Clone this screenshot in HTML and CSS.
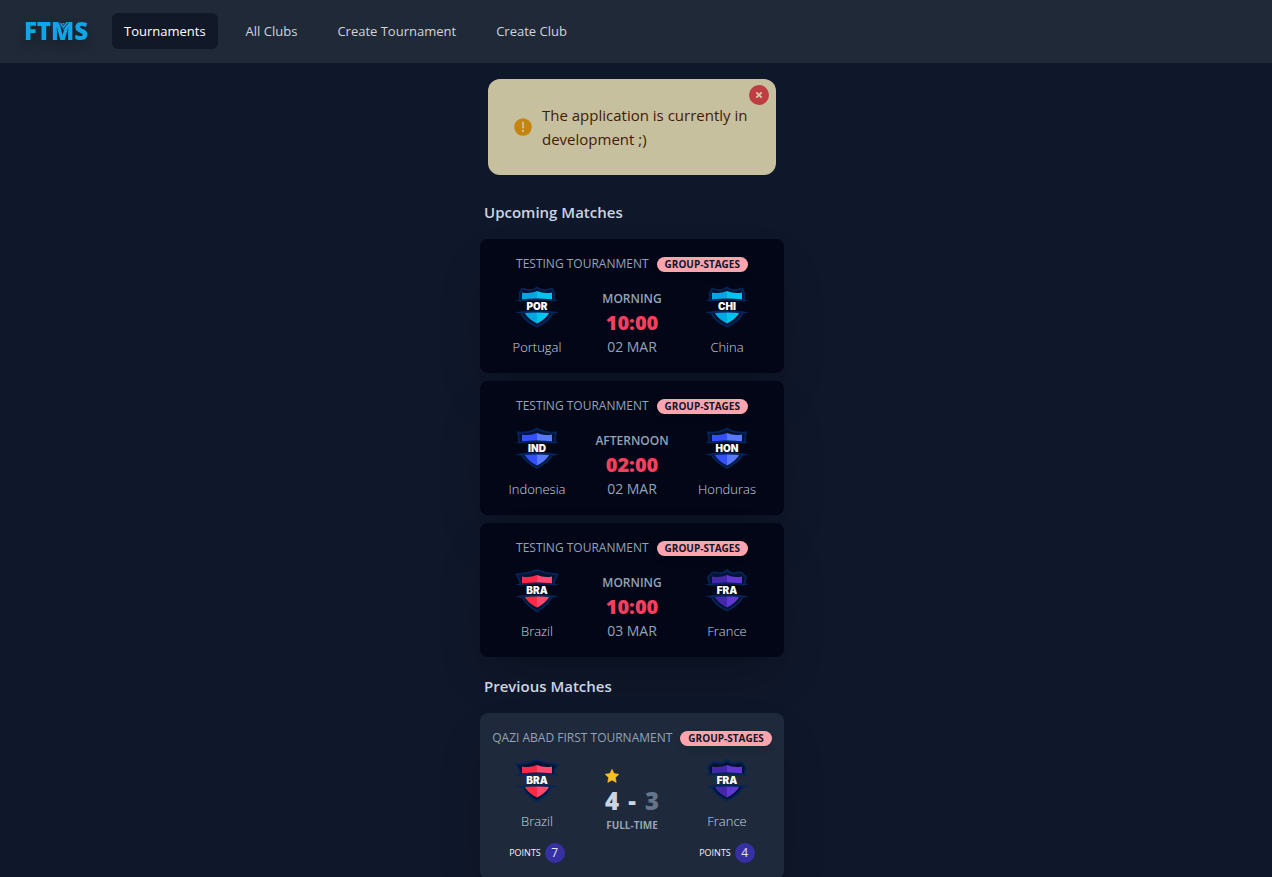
FILE: index.html
```html
<!DOCTYPE html>
<html lang="en">
<head>
<meta charset="utf-8">
<title>FTMS</title>
<meta name="viewport" content="width=device-width, initial-scale=1">
<link rel="stylesheet" href="styles.css">
</head>
<body>
<svg class="defs" aria-hidden="true">
  <defs>
    <clipPath id="bands"><path d="M0 0H44V15.500Q22 12 0 15.500ZM0 28.500Q22 25 44 28.500V44H0Z"/></clipPath>
    <path id="band" d="M0 15.500L5 14.800Q22 12.400 39 14.800L44 15.500L39 16.600Q22 14.200 5 16.600ZM0 27.500L5 26.400Q22 24.200 39 26.400L44 27.500L39 28.600Q22 26.200 5 28.600Z" fill="#03265a"/>
    <path id="outer-wave" d="M22 2.500Q26.500 6 31 5L37 3.500Q37.500 6 39.500 8Q39 13 39.500 18C40 29 33 37 22 41.500C11 37 4 29 4.500 18Q5 13 4.500 8Q6.500 6 7 3.500L13 5Q17.500 6 22 2.500Z"/>
    <path id="outer-peak" d="M22 1.500Q30 6.500 41 5.500Q39.500 11 40 18C40 28 34 34 22 41C10 34 4 28 4 18Q4.500 11 3 5.500Q14 6.500 22 1.500Z"/>
    <path id="outer-red" d="M22 1Q32 5 42.500 5.500L39 12Q39.500 20 37 27Q34 35 22 42.500Q10 35 7 27Q4.500 20 5 12L1.500 5.500Q12 5 22 1Z"/>
    <path id="outer-cloud" d="M22 1Q25.500 4.500 29 4.500Q33 3 36 3.500Q38 4 38.500 6Q41 7 41 9Q39 13 39.500 18C40 29 34 36 22 41.500C10 36 4 29 4.500 18Q5 13 3 9Q3 7 5.500 6Q6 4 8 3.500Q11 3 15 4.500Q18.500 4.500 22 1Z"/>
    <path id="half-left" d="M22 6Q15 9 7 7.500V18C7 27 13 34 22 38.500Z"/>
    <path id="half-right" d="M22 6Q29 9 37 7.500V18C37 27 31 34 22 38.500Z"/>
    <g id="crest-cyan"><g clip-path="url(#bands)"><use href="#outer-wave" fill="#021230" stroke="#03265a" stroke-width="1.800"/><use href="#half-left" fill="#00a8e0"/><use href="#half-right" fill="#00c4ec"/></g><use href="#band"/></g>
    <g id="crest-blue"><g clip-path="url(#bands)"><use href="#outer-peak" fill="#021230" stroke="#03265a" stroke-width="1.800"/><use href="#half-left" fill="#3350ff"/><use href="#half-right" fill="#5878ff"/></g><use href="#band"/></g>
    <g id="crest-red"><g clip-path="url(#bands)"><use href="#outer-red" fill="#021230" stroke="#03265a" stroke-width="1.800"/><use href="#half-left" fill="#ff2846"/><use href="#half-right" fill="#ff4870"/></g><use href="#band"/></g>
    <g id="crest-violet"><g clip-path="url(#bands)"><use href="#outer-cloud" fill="#021230" stroke="#03265a" stroke-width="1.800"/><use href="#half-left" fill="#4428ac"/><use href="#half-right" fill="#6038d0"/></g><use href="#band"/></g>
  </defs>
</svg>

<header class="navbar">
  <a class="logo" href="#" aria-label="FTMS home">
    <svg width="64" height="36" viewBox="0 0 64 36" aria-hidden="true">
      <text class="logo-text" x="32" y="27" text-anchor="middle">FTMS</text>
      <path d="M34 10H45L39.500 17Z" fill="#0ea5e9"/>
      <path d="M34.500 9.500L39.500 16L44.500 9.500M37.500 9.500L39.500 12.500L41.500 9.500" fill="none" stroke="#1f2937" stroke-width=".9"/>
    </svg>
  </a>
  <nav class="links">
    <a class="link active" href="#">Tournaments</a>
    <a class="link" href="#">All Clubs</a>
    <a class="link" href="#">Create Tournament</a>
    <a class="link" href="#">Create Club</a>
  </nav>
</header>

<main class="page">
  <div class="alert" role="alert">
    <svg class="alert-icon" width="18" height="18" viewBox="0 0 18 18" aria-hidden="true"><circle cx="9" cy="9" r="8.800" fill="#c5830f"/><path d="M9 4.500V9.500" stroke="#c6c09f" stroke-width="1.900" stroke-linecap="round"/><circle cx="9" cy="13" r="1.200" fill="#c6c09f"/></svg>
    <p class="alert-text">The application is currently in development ;)</p>
    <button class="close" type="button" aria-label="Dismiss"><svg width="8" height="8" viewBox="0 0 8 8" aria-hidden="true"><path d="M1.300 1.300L6.700 6.700M6.700 1.300L1.300 6.700" stroke="#d8c8ae" stroke-width="1.800"/></svg></button>
  </div>

  <section class="section">
    <h2 class="heading">Upcoming Matches</h2>
    <div class="cards">
      <article class="card">
        <div class="card-top"><span class="tournament">Testing Touranment</span><span class="badge">Group-Stages</span></div>
        <div class="match">
          <div class="team"><svg class="crest" viewBox="0 0 44 44"><use href="#crest-cyan"/><text class="code" x="22" y="25">POR</text></svg><span class="name">Portugal</span></div>
          <div class="middle"><span class="period">Morning</span><span class="time">10:00</span><span class="date">02 Mar</span></div>
          <div class="team"><svg class="crest" viewBox="0 0 44 44"><use href="#crest-cyan"/><text class="code" x="22" y="25">CHI</text></svg><span class="name">China</span></div>
        </div>
      </article>
      <article class="card">
        <div class="card-top"><span class="tournament">Testing Touranment</span><span class="badge">Group-Stages</span></div>
        <div class="match">
          <div class="team"><svg class="crest" viewBox="0 0 44 44"><use href="#crest-blue"/><text class="code" x="22" y="25">IND</text></svg><span class="name">Indonesia</span></div>
          <div class="middle"><span class="period">Afternoon</span><span class="time">02:00</span><span class="date">02 Mar</span></div>
          <div class="team"><svg class="crest" viewBox="0 0 44 44"><use href="#crest-blue"/><text class="code" x="22" y="25">HON</text></svg><span class="name">Honduras</span></div>
        </div>
      </article>
      <article class="card">
        <div class="card-top"><span class="tournament">Testing Touranment</span><span class="badge">Group-Stages</span></div>
        <div class="match">
          <div class="team"><svg class="crest" viewBox="0 0 44 44"><use href="#crest-red"/><text class="code" x="22" y="25">BRA</text></svg><span class="name">Brazil</span></div>
          <div class="middle"><span class="period">Morning</span><span class="time">10:00</span><span class="date">03 Mar</span></div>
          <div class="team"><svg class="crest" viewBox="0 0 44 44"><use href="#crest-violet"/><text class="code" x="22" y="25">FRA</text></svg><span class="name">France</span></div>
        </div>
      </article>
    </div>
  </section>

  <section class="section">
    <h2 class="heading">Previous Matches</h2>
    <div class="cards">
      <article class="card played">
        <div class="card-top"><span class="tournament">Qazi Abad First Tournament</span><span class="badge">Group-Stages</span></div>
        <div class="match">
          <div class="team"><svg class="crest" viewBox="0 0 44 44"><use href="#crest-red"/><text class="code" x="22" y="25">BRA</text></svg><span class="name">Brazil</span><span class="points">Points <b class="count">7</b></span></div>
          <div class="result">
            <div class="score">
              <svg class="star" width="14" height="14" viewBox="0 0 14 14" aria-label="Winner"><path d="M7 .3L9.100 4.600L13.800 5.300L10.400 8.600L11.200 13.400L7 11.100L2.800 13.400L3.600 8.600L.2 5.300L4.900 4.600Z" fill="#fbbf24" stroke="#fbbf24" stroke-width=".6" stroke-linejoin="round"/></svg>
              <span class="goals">4</span><span class="goals">-</span><span class="goals lost">3</span>
            </div>
            <span class="status">Full-Time</span>
          </div>
          <div class="team"><svg class="crest" viewBox="0 0 44 44"><use href="#crest-violet"/><text class="code" x="22" y="25">FRA</text></svg><span class="name">France</span><span class="points">Points <b class="count">4</b></span></div>
        </div>
      </article>
    </div>
  </section>
</main>
</body>
</html>
```
FILE: styles.css
```css
*, *::before, *::after { box-sizing: border-box; }

body {
  margin: 0;
  background: #0f172a;
  color: #cbd5e1;
  font-family: "Open Sans", "Noto Sans", sans-serif;
  font-size: 14px;
  line-height: 20px;
}

.defs { position: absolute; width: 0; height: 0; }

.navbar {
  display: flex;
  align-items: center;
  gap: 24px;
  padding: 13px 24px 14px;
  background: #1f2937;
}

.logo { display: block; filter: drop-shadow(0 6px 5px rgb(0 0 0 / 25%)); }
.logo svg { display: block; overflow: visible; }
.logo-text { font-size: 24px; font-weight: 800; fill: #0ea5e9; }

.links { display: flex; gap: 16px; }
.link {
  padding: 8px 12px;
  border-radius: 6px;
  color: #d1d5db;
  font-size: 13px;
  text-decoration: none;
}
.link.active { background: #111827; color: #fff; }

.page {
  display: flex;
  flex-direction: column;
  align-items: center;
  padding: 16px 8px 0 0;
}

.alert {
  position: relative;
  display: flex;
  align-items: center;
  gap: 10px;
  width: 288px;
  margin-bottom: 8px;
  padding: 24px 24px 24px 26px;
  border-radius: 12px;
  background: #c6c09f;
  color: #431a08;
}
.alert-icon { flex: none; }
.alert-text { margin: 0; font-size: 15px; line-height: 24px; }
.close {
  position: absolute;
  top: 6px;
  right: 7px;
  display: grid;
  place-items: center;
  width: 20px;
  height: 20px;
  padding: 0;
  border: 0;
  border-radius: 50%;
  background: #bf3c42;
}

.section { width: 304px; padding-top: 17px; }
.heading {
  margin: 0 0 15px;
  padding-left: 4px;
  font-size: 15px;
  font-weight: 600;
  line-height: 24px;
}

.cards { display: flex; flex-direction: column; gap: 8px; }
.card {
  padding: 16px 12px;
  border-radius: 8px;
  background: #020617;
  box-shadow: 0 25px 50px -12px rgb(0 0 0 / 25%);
}
.card.played { background: #1e293b; }

.card-top {
  display: flex;
  align-items: center;
  justify-content: center;
  gap: 8px;
  height: 18px;
  margin-bottom: 12px;
  text-transform: uppercase;
  white-space: nowrap;
}
.tournament { color: #94a3b8; font-size: 12px; }
.badge {
  padding: 0 8px;
  border-radius: 8px;
  background: #fda4af;
  color: #0f172a;
  font-size: 10px;
  font-weight: 700;
  line-height: 15px;
  box-shadow: 0 4px 6px rgb(0 0 0 / 10%);
}

.match {
  display: grid;
  grid-template-columns: 90px 1fr 90px;
}
.team { display: flex; flex-direction: column; align-items: center; }
.crest { width: 44px; height: 44px; margin-bottom: 9px; }
.code {
  font-family: Inter, sans-serif;
  font-size: 10px;
  font-weight: 900;
  text-anchor: middle;
  fill: #fff;
}
.name { font-size: 13px; font-weight: 300; line-height: 19px; }

.middle {
  display: flex;
  flex-direction: column;
  align-items: center;
  justify-content: flex-end;
  color: #94a3b8;
  text-transform: uppercase;
}
.period { margin-bottom: 2px; font-size: 12px; font-weight: 600; line-height: 16px; }
.time { color: #f43f5e; font-size: 20px; font-weight: 800; line-height: 28px; }
.date { font-weight: 500; }

.points {
  display: flex;
  align-items: center;
  gap: 4px;
  margin-top: 12px;
  color: #f1f5f9;
  font-size: 9px;
  text-transform: uppercase;
}
.count {
  width: 20px;
  border-radius: 50%;
  background: #3730a3;
  color: #e2e8f0;
  font-size: 12px;
  font-weight: 400;
  text-align: center;
}

.result { display: flex; flex-direction: column; align-items: center; padding-top: 10px; }
.score {
  display: grid;
  grid-template-columns: repeat(3, 20px);
  justify-items: center;
}
.star { grid-column: 1 / -1; justify-self: start; margin-left: 3px; }
.goals { font-size: 24px; font-weight: 800; line-height: 36px; }
.goals.lost { color: #64748b; }
.status { color: #94a3b8; font-size: 10px; font-weight: 700; line-height: 12px; text-transform: uppercase; }
```
